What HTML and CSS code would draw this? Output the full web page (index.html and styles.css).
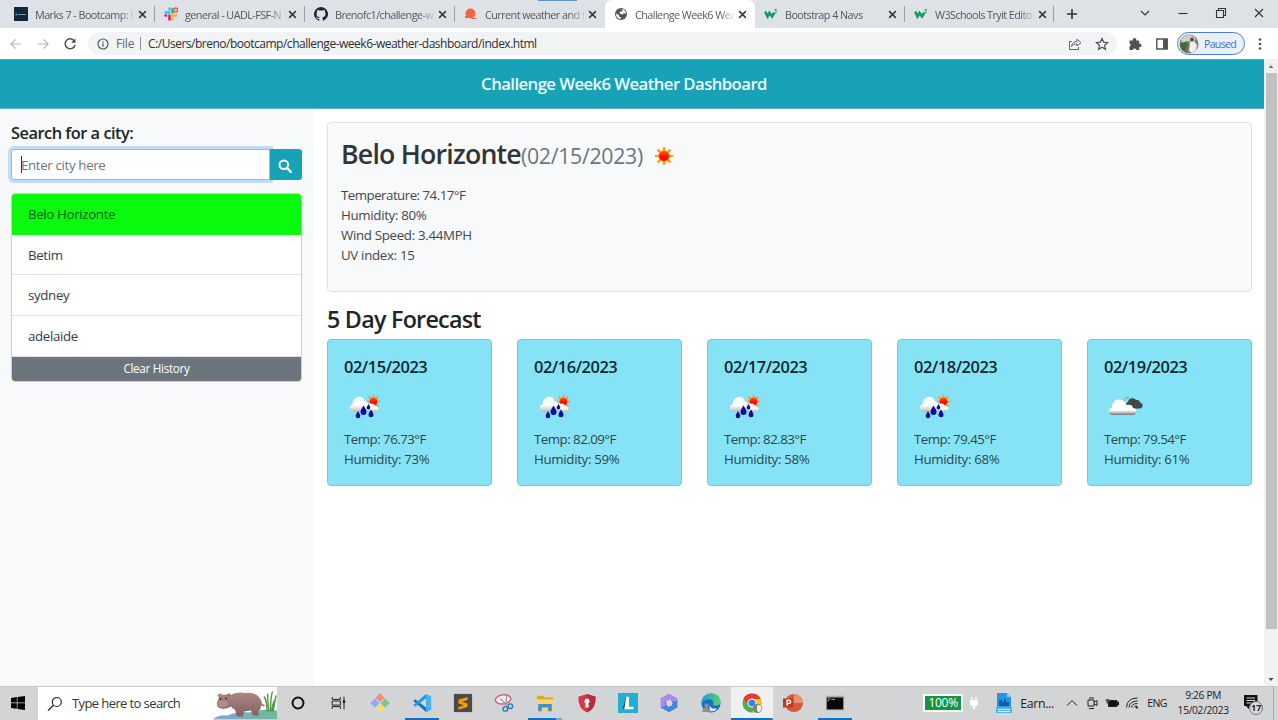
FILE: index.html
```
<!DOCTYPE html>
<html lang="en">
<head>
<meta charset="utf-8">
<title>Challenge Week6 Weather Dashboard</title>
<link rel="stylesheet" href="styles.css">
</head>
<body>
<svg class="defs" width="0" height="0" aria-hidden="true">
  <defs>
    <linearGradient id="cloudFill" x1="0" y1="0" x2="0" y2="1"><stop offset="0.55" stop-color="#fff"/><stop offset="1" stop-color="#b8b8b8"/></linearGradient>
    <linearGradient id="cloudEdge" x1="0" y1="0" x2="0" y2="1"><stop offset="0.7" stop-color="#fff"/><stop offset="1" stop-color="#777"/></linearGradient>
    <linearGradient id="sunFill" x1="0" y1="0" x2="0" y2="1"><stop offset="0" stop-color="#ff5a00"/><stop offset="0.6" stop-color="#ff0800"/></linearGradient>
    <linearGradient id="hippo" x1="0" y1="0" x2="0" y2="1"><stop offset="0" stop-color="#b08780"/><stop offset="1" stop-color="#80605f"/></linearGradient>
    <linearGradient id="water" x1="0" y1="0" x2="1" y2="0"><stop offset="0" stop-color="#83a4d6"/><stop offset="1" stop-color="#70b8a0"/></linearGradient>
    <linearGradient id="edgeTop" x1="0" y1="0" x2="1" y2="0"><stop offset="0" stop-color="#1aa0dc"/><stop offset="1" stop-color="#5cd068"/></linearGradient>
    <symbol id="sun" viewBox="0 0 20 20">
      <circle cx="10" cy="10" r="6" fill="#ffae35"/>
      <path stroke="#ff9420" stroke-width="2.200" d="M10 1v18M1 10h18M3.600 3.600l12.800 12.800M16.400 3.600L3.600 16.400"/>
      <circle cx="10" cy="10" r="4.900" fill="url(#sunFill)"/>
    </symbol>
    <symbol id="rain" viewBox="0 0 32 26">
      <use href="#sun" x="17" y="0" width="15" height="15"/>
      <path fill="url(#cloudFill)" d="M17 18c-2-1-1-5 1.500-5 0-4 6.500-5 7.500-1 4-.5 5 5 1 6z"/>
      <path fill="url(#cloudFill)" d="M4.500 18C0 18-.5 11 3.500 10.500 3.500 2 14 0 15.500 7c4 .5 5 4.500 3.500 7l1 4z"/>
      <g fill="#0a1196"><path d="M14.500 11.500c2 3.500 3 4.500 3 6.500a3 3 0 0 1-6 0c0-2 1-3 3-6.500z"/><path d="M19.500 10c1.300 2.200 1.800 2.800 1.800 3.800a1.800 1.800 0 0 1-3.600 0c0-1 .5-1.600 1.800-3.800z"/><path d="M9 17c1.500 2.500 2.300 3.500 2.300 5a2.300 2.300 0 0 1-4.600 0c0-1.500.8-2.500 2.300-5z"/><path d="M22 15.500c1.700 2.700 2.500 3.900 2.500 5.300a2.500 2.500 0 0 1-5 0c0-1.400.8-2.600 2.500-5.300z"/></g>
    </symbol>
    <symbol id="clouds" viewBox="0 0 36 20">
      <path fill="#464646" d="M20 13c-3-2-3-6 0-7 0-4 6-5 8-2 3-.5 4 1 4 2.500 4 1 3 5.500 0 6z"/>
      <path d="M16 6c0-3 2-5 5-4" stroke="#8b8b8b" fill="none"/>
      <path fill="url(#cloudEdge)" d="M4.500 19C-.5 19 0 12 4 11.500 3.500 5 9.500 2 14 4c3 1 4 3 4.500 5 4-1 6 0 6.500 3 5 0 4 7 0 7z"/>
    </symbol>
    <symbol id="x" viewBox="0 0 8 8"><path d="M1 1l6 6M7 1L1 7" stroke="#36393d" stroke-width="1.400" fill="none"/></symbol>
    <symbol id="w3" viewBox="0 0 14 12"><path d="M1.200 3.500l2.300 5 2-3.500L8 8.500l2.500-4" fill="none" stroke="#119c66" stroke-width="2.600"/><path d="M10.500 1.500h2L11.500 3q2 1 0 2" fill="none" stroke="#119c66" stroke-width=".9"/></symbol>
  </defs>
</svg>

<header class="browser">
  <div class="tabs">
    <div class="tab"><svg class="fav" viewBox="0 0 14 14"><path fill="#12283a" d="M0 0h14v14H0z"/><path fill="#8196a5" d="M1.500 6.500h1.500v2H1.500zM4 7h8v1H4z"/></svg><span class="tab-title">Marks 7 - Bootcamp: U</span><svg class="close"><use href="#x"/></svg></div>
    <div class="tab"><svg class="fav" viewBox="0 0 14 14" fill="none" stroke-width="2.500" stroke-linecap="round"><path d="M1.500 5.500h4M5.500 1.500v1" stroke="#36c5f0"/><path d="M8.500 2v3.500" stroke="#2eb67d"/><path d="M8.500 8.500h4M8.500 11.500v.8" stroke="#ecb22e"/><path d="M5.500 8.500v4M1.500 8.500h.5" stroke="#e01e5a"/><circle cx="11.600" cy="3" r="2" stroke="#e8515d" stroke-width="1.300" fill="#f6c9cc"/></svg><span class="tab-title">general - UADL-FSF-N</span><svg class="close"><use href="#x"/></svg></div>
    <div class="tab"><svg class="fav" viewBox="0 0 16 16"><path fill="#20262c" d="M8 0a8 8 0 0 0-2.530 15.590c.4.070.55-.170.55-.380v-1.490c-2.010.370-2.530-.490-2.690-.940-.090-.230-.480-.940-.820-1.130-.280-.150-.680-.520-.010-.530.630-.010 1.080.580 1.230.820.720 1.210 1.870.870 2.330.660.070-.520.280-.870.510-1.070-1.780-.200-3.640-.890-3.640-3.950 0-.870.310-1.590.820-2.150-.080-.200-.360-1.020.080-2.120 0 0 .670-.210 2.200.820a7.600 7.600 0 0 1 4 0c1.530-1.040 2.200-.820 2.200-.820.440 1.100.160 1.920.080 2.120.510.560.820 1.270.820 2.150 0 3.070-1.870 3.750-3.650 3.950.290.250.540.730.540 1.480v2.200c0 .210.150.460.550.380A8 8 0 0 0 8 0z"/></svg><span class="tab-title">Brenofc1/challenge-w</span><svg class="close"><use href="#x"/></svg></div>
    <div class="tab no-sep"><svg class="fav" viewBox="0 0 14 14"><circle cx="6.500" cy="6.500" r="5" fill="#ea6a47"/><path fill="#ea6a47" d="M1 9h8l4 3H8l-1-1H1z"/><path d="M9 10.500h3.500" stroke="#f7c1b0"/></svg><span class="tab-title">Current weather and f</span><svg class="close"><use href="#x"/></svg></div>
    <div class="tab active"><svg class="fav" viewBox="0 0 14 14"><circle cx="7" cy="7" r="6" fill="#53575b"/><path fill="#fff" d="M2 6.500l3 1.500v1.500l2 1v1.300C4 12 2 10 2 6.500zM6 2.200l3 .3-1 2-2 .3-.5 1.700 3 1 1.500-1.500 1.700 1.200C12 5 11 3 9 2z"/></svg><span class="tab-title">Challenge Week6 Wea</span><svg class="close"><use href="#x"/></svg></div>
    <div class="tab"><svg class="fav"><use href="#w3"/></svg><span class="tab-title">Bootstrap 4 Navs</span><svg class="close"><use href="#x"/></svg></div>
    <div class="tab last"><svg class="fav"><use href="#w3"/></svg><span class="tab-title">W3Schools Tryit Edito</span><svg class="close"><use href="#x"/></svg></div>
    <svg class="plus" viewBox="0 0 12 12"><path d="M6 1v10M1 6h10" stroke="#303338" stroke-width="1.600"/></svg>
    <div class="window-controls" >
      <svg viewBox="0 0 12 12"><path d="M2 4l4 4 4-4" /></svg>
      <svg viewBox="0 0 12 12"><path d="M1.500 6.500h9"/></svg>
      <svg viewBox="0 0 12 12"><path d="M1.500 3.500h7v7h-7zM3.500 3.500v-2h7v7h-2"/></svg>
      <svg viewBox="0 0 12 12"><path d="M2 2l8 8M10 2l-8 8"/></svg>
    </div>
    <i class="strip"></i>
  </div>
  <div class="toolbar">
    <svg class="nav-icon dim" viewBox="0 0 14 14"><path d="M12 7H2.500M6.500 2.500L2 7l4.500 4.500"/></svg>
    <svg class="nav-icon dim" viewBox="0 0 14 14"><path d="M2 7h9.500M7.500 2.500L12 7l-4.500 4.500"/></svg>
    <svg class="nav-icon" viewBox="0 0 14 14"><path d="M11.500 4.300A5 5 0 1 0 12 8" stroke-width="1.500"/><path d="M12.500 1.500v4.300H8.200z" fill="#4b4f53" stroke="none"/></svg>
    <div class="omnibox">
      <svg class="info" viewBox="0 0 12 12"><circle cx="6" cy="6" r="5" fill="none" stroke="#55595d" stroke-width="1.200"/><path d="M6 5.300v3.400M6 3.200v1.200" stroke="#55595d" stroke-width="1.200"/></svg>
      <span class="scheme">File</span><i class="bar"></i><span class="url">C:/Users/breno/bootcamp/challenge-week6-weather-dashboard/index.html</span>
      <svg class="share" viewBox="0 0 14 14" fill="none" stroke="#62666a"><path d="M4 4.500H1.500v8h9V10M3.500 9.500c.5-3.500 2.500-5 5.500-5v-2.300L13 5.700 9 9V7C6.500 7 5 7.500 3.500 9.500z"/></svg>
      <svg class="star" viewBox="0 0 14 14" fill="none" stroke="#4d5155" stroke-width="1.200"><path d="M7 1.500l1.600 3.700 4 .4-3 2.700.9 4L7 10.200l-3.500 2.100.9-4-3-2.700 4-.4z"/></svg>
    </div>
    <svg class="ext" viewBox="0 0 14 14"><path fill="#505458" d="M1.500 3.500h3.300a1.800 1.800 0 1 1 3.400 0h3v3.200a1.800 1.800 0 1 1 0 3.400v2.900H8.300a1.800 1.800 0 0 0-3.500 0H1.500V9.600a1.800 1.800 0 0 0 0-3.300z"/></svg>
    <svg class="panel" viewBox="0 0 14 14"><path d="M1.800 2h10.400v10H1.800z" fill="none" stroke="#505458" stroke-width="1.400"/><path fill="#505458" d="M8 2h4.500v10H8z"/></svg>
    <div class="profile"><svg viewBox="0 0 20 20"><circle cx="10" cy="10" r="9.500" fill="#6f8866"/><path fill="#c9d3d6" d="M2 5q8-8 15 0l-3 3-6-1-5 2z"/><path fill="#446b38" d="M1 9l6-1 3 4-3 6Q1 16 1 9z"/><path fill="#f2eeee" d="M11 8l4-1 3 4-1 5-4 3-3-2z"/><circle cx="13" cy="5.500" r="2" fill="#5d4a40"/><path d="M9 11l-2 7" stroke="#8b6a5c" stroke-width="1.500"/></svg><span>Paused</span></div>
    <svg class="dots" viewBox="0 0 4 14" fill="#505458"><circle cx="2" cy="2.500" r="1.300"/><circle cx="2" cy="7" r="1.300"/><circle cx="2" cy="11.500" r="1.300"/></svg>
  </div>
</header>

<div class="viewport">
  <div class="page">
    <div class="banner"><h1>Challenge Week6 Weather Dashboard</h1></div>
    <div class="columns">
      <aside class="sidebar">
        <h3 class="label">Search for a city:</h3>
        <div class="search"><div class="field"><i class="caret"></i><span>Enter city here</span></div><div class="search-btn"><svg viewBox="0 0 14 14"><circle cx="5.800" cy="5.800" r="4.300" fill="none" stroke="#fff" stroke-width="2"/><path d="M9 9l3.800 3.800" stroke="#fff" stroke-width="2.400" stroke-linecap="round"/></svg></div></div>
        <div class="history">
          <div class="city selected"><span>Belo Horizonte</span></div>
          <div class="city"><span>Betim</span></div>
          <div class="city"><span>sydney</span></div>
          <div class="city"><span>adelaide</span></div>
          <div class="clear"><span>Clear History</span></div>
        </div>
      </aside>
      <main class="content">
        <section class="today">
          <div class="today-head"><h2>Belo Horizonte</h2><span class="date">(02/15/2023)</span><svg class="today-icon"><use href="#sun"/></svg></div>
          <p class="temp">Temperature: 74.17°F</p><p>Humidity: 80%</p><p>Wind Speed: 3.44MPH</p><p>UV index: 15</p>
        </section>
        <h2 class="forecast-title">5 Day Forecast</h2>
        <section class="forecast">
          <article class="day"><h4>02/15/2023</h4><svg class="wx"><use href="#rain"/></svg><p class="temp">Temp: 76.73°F</p><p>Humidity: 73%</p></article>
          <article class="day"><h4>02/16/2023</h4><svg class="wx"><use href="#rain"/></svg><p class="temp">Temp: 82.09°F</p><p>Humidity: 59%</p></article>
          <article class="day"><h4>02/17/2023</h4><svg class="wx"><use href="#rain"/></svg><p class="temp">Temp: 82.83°F</p><p>Humidity: 58%</p></article>
          <article class="day"><h4>02/18/2023</h4><svg class="wx"><use href="#rain"/></svg><p class="temp">Temp: 79.45°F</p><p>Humidity: 68%</p></article>
          <article class="day"><h4>02/19/2023</h4><svg class="wx cloudy"><use href="#clouds"/></svg><p class="temp">Temp: 79.54°F</p><p>Humidity: 61%</p></article>
        </section>
      </main>
    </div>
  </div>
  <div class="scrollbar"><svg viewBox="0 0 14 14"><path d="M4.500 9L7 6l2.500 3z" fill="#777"/></svg><i class="thumb"></i><svg viewBox="0 0 14 14"><path d="M4.500 6L7 9l2.500-3z" fill="#444"/></svg></div>
</div>

<footer class="taskbar">
  <div class="start"><svg viewBox="0 0 14 14"><path d="M0 2l5.800-.9v5.400H0zM6.500 1L14 0v6.500H6.500zM0 7.300h5.800v5.500L0 12zM6.500 7.300H14V14l-7.500-1.100z"/></svg></div>
  <div class="task-search">
    <svg class="lens" viewBox="0 0 16 16"><circle cx="9.800" cy="6" r="4.500" fill="none" stroke="#222" stroke-width="1.200"/><path d="M6.500 9.200L1 14.500" stroke="#222" stroke-width="1.300"/></svg>
    <span>Type here to search</span>
    <svg class="hippo" viewBox="0 0 64 32"><path fill="url(#water)" d="M0 32q6-5 14-4 12-5 22-3 14-4 28-2v9z"/><path fill="url(#hippo)" d="M16 8Q24 4 32 5.500q9-1.500 14 4 3 4 3 7l3 1-1 1.500-3-1q0 4-3 6l1 4h-6l-2-5-7 1-1 5h-6l-2-7q-3-1-4-3-5 3-10 2-5-1-4-6l2-5-1-3 3-1 2 1.500 5-1 2-1.500z"/><path fill="#8e6563" d="M4.500 7l2 .5-1 2zM15 6.500l2.500 0-1.500 3z"/><path fill="#b98a86" d="M4.500 14q4-2 9.500 0l1 4q-5 3-11 .5z"/><circle cx="7.500" cy="11.500" r=".8"/><circle cx="13" cy="11" r=".8"/><path d="M54 24q0-11-3-15M56 24q-2-13-1-18M57.500 24q0-14 2-20M59 24q0-8 4-13M60 24l3-16" fill="none" stroke="#4d9b48" stroke-width="1.400"/></svg>
  </div>
  <div class="apps">
    <div class="app"><svg viewBox="0 0 22 22"><circle cx="11" cy="11" r="6" fill="none" stroke="#111" stroke-width="2.200"/></svg></div>
    <div class="app"><svg viewBox="0 0 22 22" fill="none" stroke="#222" stroke-width="1.100"><path d="M3.500 4.500V7h9V4.500M3.500 8.800h9v4.500h-9zM3.500 17.500V15h9v2.500M16.500 4v14"/><path d="M15.200 8h2.600v3h-2.600z" fill="#222" stroke="none"/></svg></div>
    <div class="app"><svg viewBox="0 0 22 22"><g transform="rotate(45 11 11)"><path fill="#f48a85" d="M3.500 3.500h7v7h-7z"/><path fill="#82c77a" d="M11.500 3.500h7v7h-7z"/><path fill="#8dabf0" d="M3.500 11.500h7v7h-7z"/><path fill="#f7dc74" d="M11.500 11.500h7v7h-7z"/></g></svg></div>
    <div class="app run"><svg viewBox="0 0 22 22"><path fill="#1474bd" d="M15.500 1L17 14v7h-1.500L1.500 8.800 3.500 7l12 9z"/><path fill="#2397e0" d="M15.500 1v4.800L3.500 15l-2-1.800z"/><path fill="#45b2f5" d="M15.500 1L21 3.500v15L15.500 21z"/></svg></div>
    <div class="app"><svg viewBox="0 0 22 22"><path fill="#4b4b4b" d="M1 1h20v20H1z"/><path fill="#ff9800" d="M16 4.500v3.200L10 9.500l6 2v4l-10 3v-3.200l6-1.800-6-2v-4z"/></svg></div>
    <div class="app"><svg viewBox="0 0 22 22" fill="none"><ellipse cx="10" cy="7" rx="8.500" ry="5" stroke="#d95a62" stroke-width="1.500" fill="#f5eeee" transform="rotate(-8 10 7)"/><path d="M14 3l-1 11M7 6l7 8" stroke="#8f969d" stroke-width="1.300"/><circle cx="12.500" cy="17.500" r="2.500" stroke="#2c75b5" stroke-width="1.500"/><circle cx="18" cy="14.500" r="2.500" stroke="#2c75b5" stroke-width="1.500"/></svg></div>
    <div class="app run more"><svg viewBox="0 0 22 22"><path fill="#dba92f" d="M2 3h7l2 2h9v5H2z"/><path fill="#fbd668" d="M2 7h18v12H2z"/><path fill="#3f91d4" d="M3.500 12h15v8h-4v-4h-7v4h-4z"/></svg></div>
    <div class="app"><svg viewBox="0 0 22 22"><path fill="#d83846" d="M11 1l9.500 3q.5 13-9.500 17.500Q1 17 1.500 4z"/><path fill="#b92c3d" d="M11 1l9.500 3q.5 13-9.500 17.500z"/><path fill="#fff" d="M11 6a3 3 0 0 1 1.500 5.500L13 16H9l.5-4.500A3 3 0 0 1 11 6z"/></svg></div>
    <div class="app"><svg viewBox="0 0 22 22"><path fill="#22aed1" d="M0 0h22v22H0z"/><path fill="#11445c" d="M5 18L9 4v11z"/><path fill="#fff" d="M9 4h3v11h5v3H7z"/></svg></div>
    <div class="app"><svg viewBox="0 0 22 22"><path fill="#705ac5" d="M11 1l9 5v10l-9 5-9-5V6z"/><path fill="#a98bea" d="M11 1l9 5v5l-9-4-4 3v6l-5-1V6z"/><path fill="#4286de" d="M2 16l9-3 9-5v8l-9 5z"/><path fill="#d4d4de" d="M8 9l4-2 3 3-1 4-4 1-2-2z"/></svg></div>
    <div class="app"><svg viewBox="0 0 22 22"><circle cx="11" cy="11" r="10.500" fill="#176fc1"/><path fill="url(#edgeTop)" d="M.5 11C.5-2.500 21-2.500 21.500 9c0 4-3 5-6 5-4 0-2-2-2-4 0-4-8-5-13 1z"/><path fill="#d9e7ee" d="M9 12q1 6 9 5-3 4-8 3z"/><circle cx="6" cy="14" r="2.400" fill="#8e8e8e"/><path fill="#8e8e8e" d="M1.500 21q0-5 4.500-5t4.500 5z"/></svg></div>
    <div class="app current"><svg viewBox="0 0 22 22"><circle cx="11" cy="11" r="10.500" fill="#4caf50"/><path fill="#e63b2e" d="M1.500 6.500A10.500 10.500 0 0 1 20.500 6.500l-9.500.5-4 5z"/><path fill="#fbc116" d="M20.500 6.500A10.500 10.500 0 0 1 11 21.500l4-8.500-3-6z"/><circle cx="11" cy="11" r="5" fill="#fff"/><circle cx="11" cy="11" r="3.900" fill="#3f7fe8"/><circle cx="17" cy="17" r="5" fill="#778371"/><path fill="#f0eeea" d="M16.500 13.500l4 0 1 5-3 3-2-2z"/></svg></div>
    <div class="app"><svg viewBox="0 0 22 22"><circle cx="12" cy="11" r="10" fill="#d85838"/><path fill="#ef9071" d="M12 1A10 10 0 0 1 22 11H12z"/><path fill="#bd3b1c" d="M0 6h11v10H0z"/><path d="M4.500 14V8h2q2 0 2 1.700T6.500 11.500h-2" fill="none" stroke="#fff" stroke-width="1.500"/></svg></div>
    <div class="app run"><svg viewBox="0 0 22 22"><path fill="#aaa" d="M1 3h20v16H1z"/><path fill="#090909" d="M2 5h18v13H2z"/><path d="M3 6.500h3M7 7h4M2.500 8.500h2" stroke="#bbb"/></svg></div>
  </div>
  <div class="tray">
    <div class="battery">100%</div>
    <svg class="plug" viewBox="0 0 12 16"><path fill="#fff" d="M3 2h1.300v3h3V2h1.300v3H10v3q0 3-3 3.500V14H5v-2.500Q2 11 2 8V5h1z"/></svg>
    <svg class="news" viewBox="0 0 16 20"><path fill="#2696df" d="M1 0h10l4 4v10H1z"/><path fill="#80cdf5" d="M11 0l4 4h-4z"/><path fill="#0e5ea8" d="M3 11V7h3v2h2V6h2v3h3v4H3z"/><path fill="#4db7ed" d="M0 14h16v6H0z"/><path d="M2 16.500h12M2 18.500h12" stroke="#eef"/></svg>
    <span class="earn">Earn...</span>
    <svg class="t-icon up" viewBox="0 0 14 14"><path d="M2 9.500L7 4.500l5 5"/></svg>
    <svg class="t-icon" viewBox="0 0 14 14"><path d="M3 4h6v6H3zM9 6l3-1.500v5L9 8M4 2h5M4 12.500h5"/></svg>
    <svg class="t-icon" viewBox="0 0 14 14"><path d="M4.500 4.500h7.500v6H3.500V7" fill="#111"/><path fill="#111" d="M12.500 6H14v3h-1.500z"/><path d="M.5 4h4M1 6h4M3 3v5"/></svg>
    <svg class="t-icon wifi" viewBox="0 0 14 14"><path d="M1.500 11.500Q2 2 12.500 2M4 11.500Q4.500 5 12.500 5M6.500 11.500Q7 7.500 12.500 7.500M9 11.500q.5-1.500 3-1.500"/><circle cx="11.800" cy="11.500" r=".8" fill="#222"/></svg>
    <span class="lang">ENG</span>
    <div class="clock"><span>9:26 PM</span><span>15/02/2023</span></div>
    <div class="notice"><svg viewBox="0 0 16 16"><path d="M1 1h13.500v11H6v3l-3-3H1z" fill="#111"/><path d="M3.500 4h8.500M3.500 6.500h8.500M3.500 9h5" stroke="#ddd"/></svg><b>17</b></div>
    <i class="peek"></i>
  </div>
</footer>
</body>
</html>
```
FILE: styles.css
```
* { box-sizing: border-box; }
body { margin: 0; width: 1278px; height: 720px; overflow: hidden; display: flex; flex-direction: column; background: #fff; color: #212529; font-family: "Open Sans", "Noto Sans", sans-serif; font-size: 13.3px; }
h1, h2, h3, h4, p { margin: 0; white-space: nowrap; }
span { white-space: nowrap; }
svg { display: block; flex: none; }
.defs { position: absolute; }

.browser { height: 59px; flex: none; }
.tabs { position: relative; height: 28px; background: #dee1e6; display: flex; align-items: center; padding-left: 5px; }
.tab { width: 150px; height: 28px; flex: none; display: flex; align-items: center; padding-left: 9px; background: linear-gradient(#9b9ea2, #9b9ea2) right center / 1px 16px no-repeat; }
.tab.no-sep { background: none; }
.tab.active { background: #fff; border-radius: 7px 7px 0 0; }
.tab.last { width: 149px; }
.fav { width: 14px; height: 14px; margin-right: 7px; }
.tab-title { width: 99px; font-size: 10.8px; letter-spacing: -0.55px; color: #55585d; -webkit-mask-image: linear-gradient(90deg, #000 85%, rgba(0, 0, 0, 0.15) 100%); mask-image: linear-gradient(90deg, #000 85%, rgba(0, 0, 0, 0.15) 100%); }
.close { width: 9px; height: 9px; margin-left: 4px; }
.plus { width: 12px; height: 12px; margin-left: 12px; }
.window-controls { margin-left: auto; display: flex; }
.window-controls svg { width: 12px; height: 12px; margin: 0 13px; fill: none; stroke: #333; stroke-width: 1.1; position: relative; top: -1px; }
.strip { position: absolute; left: 538px; top: 0; width: 39px; height: 1px; background: #5a93cd; }
.toolbar { height: 31px; display: flex; align-items: center; padding-left: 9px; background: #fff; }
.nav-icon { width: 14px; height: 14px; margin-right: 13px; fill: none; stroke: #4b4f53; stroke-width: 1.2; }
.nav-icon.dim { stroke: #b6b8ba; }
.nav-icon:nth-child(3) { margin-right: 11px; }
.omnibox { width: 1029px; height: 23px; background: #f1f3f4; border-radius: 12px; display: flex; align-items: center; padding: 0 8px 0 9px; }
.info { width: 12px; height: 12px; margin-right: 7px; }
.scheme { width: 24px; font-size: 12px; letter-spacing: -0.2px; color: #64686c; }
.bar { width: 1px; height: 13px; background: #8d9194; margin-right: 7px; }
.url { font-size: 12px; letter-spacing: -0.49px; color: #2c2f33; }
.share { width: 14px; height: 14px; margin-left: auto; }
.star { width: 14px; height: 14px; margin-left: 13px; }
.ext { width: 14px; height: 14px; margin-left: 11px; }
.panel { width: 14px; height: 14px; margin-left: 13px; }
.profile { width: 68px; height: 23px; margin-left: 8px; border: 1px solid #4c7ed6; border-radius: 12px; background: #e9f0fc; display: flex; align-items: center; padding-left: 1px; color: #3f6ec9; font-size: 10.6px; letter-spacing: -0.7px; }
.profile svg { width: 20px; height: 20px; margin-right: 5px; }
.dots { width: 4px; height: 14px; margin-left: 13px; }

.viewport { height: 627px; flex: none; display: flex; }
.page { width: 1264px; }
.banner { height: 50px; background: #17a2b8; border-top: 1px solid #48abc0; border-bottom: 1px solid #58b6c7; padding: 0 16px 2px 0; display: flex; align-items: center; justify-content: center; }
.banner h1 { font-size: 16.7px; font-weight: 600; color: #eefdff; letter-spacing: -0.55px; }
.columns { display: flex; height: 577px; }
.sidebar { width: 314px; padding: 12px 12px 0 11px; background: #f8f9fa; }
.label { font-size: 16.4px; line-height: 24px; font-weight: 600; letter-spacing: -0.5px; }
.search { display: flex; margin-top: 4px; height: 31px; }
.field { width: 259px; border: 1px solid #80bdff; border-radius: 3px 0 0 3px; box-shadow: 0 0 0 3px #bfdeff; background: #fff; display: flex; align-items: center; padding-left: 9px; color: #6c757d; font-size: 13.3px; letter-spacing: -0.35px; }
.caret { width: 1px; height: 17px; background: #333; margin-right: -1px; }
.search-btn { width: 32px; background: #17a2b8; border-radius: 0 3px 3px 0; display: flex; align-items: center; justify-content: center; padding: 2px 2px 0 0; }
.search-btn svg { width: 14px; height: 14px; }
.history { margin-top: 13px; height: 189px; border: 1px solid #d4dc72; border-radius: 4px; overflow: hidden; background: #fff; display: grid; grid-template-rows: repeat(4, 40.7px) 1fr; }
.city { padding-left: 16px; display: flex; align-items: center; border-bottom: 1px solid #e2e3e4; color: #373d43; letter-spacing: -0.35px; }
.city.selected { background: #0afa0e; border-color: #0afa0e; color: #0b5c16; }
.clear { background: #6c757d; color: #fff; display: flex; align-items: center; justify-content: center; font-size: 11.7px; letter-spacing: -0.3px; padding-bottom: 2px; }
.content { padding: 13px 12px 0 13px; width: 950px; }
.today { height: 170px; border: 1px solid #e0e2e4; border-radius: 4px; background: #f8f9fa; padding: 15px 13px; color: #42474b; }
.today-head { display: flex; align-items: baseline; height: 47px; line-height: 32px; }
.today-head h2 { font-size: 26.7px; font-weight: 600; color: #30353a; letter-spacing: -0.78px; }
.date { font-size: 21.3px; color: #6c757d; letter-spacing: -0.3px; }
.today-icon { width: 20px; height: 20px; margin-left: 11px; align-self: flex-start; margin-top: 8px; }
.today p { line-height: 20px; letter-spacing: -0.32px; }
.today .temp { letter-spacing: -0.52px; }
.forecast-title { margin-top: 13px; height: 34px; line-height: 29px; font-size: 23.3px; font-weight: 600; letter-spacing: -0.75px; }
.forecast { display: grid; grid-template-columns: repeat(5, 165px); justify-content: space-between; }
.day { height: 147px; border: 1px solid #72c9dc; border-radius: 4px; background: #86e3f5; padding: 16px; color: #2b4850; }
.day h4 { font-size: 16.4px; line-height: 22px; font-weight: 600; color: #13272d; letter-spacing: -0.45px; }
.wx { width: 32px; height: 26px; margin: 16px 0 9px 5px; }
.wx.cloudy { width: 36px; height: 20px; margin: 18px 0 13px 4px; }
.day p { line-height: 20px; letter-spacing: -0.32px; }
.day .temp { letter-spacing: -0.52px; }
.scrollbar { width: 14px; background: #f1f1f1; display: flex; flex-direction: column; align-items: center; }
.scrollbar svg { width: 14px; height: 14px; }
.thumb { width: 11px; height: 556px; background: #c1c1c1; margin-bottom: 43px; }

.taskbar { height: 34px; background: #d3d4d5; display: flex; border-top: 1px solid #c5c6c7; }
.start { width: 38px; display: flex; align-items: center; justify-content: center; padding: 0 2px 1px 0; }
.start svg { width: 14px; height: 14px; }
.task-search { width: 239px; background: #fff; display: flex; align-items: center; padding-left: 9px; font-size: 13px; letter-spacing: -0.6px; color: #333; }
.task-search span { padding-bottom: 2px; }
.lens { width: 16px; height: 16px; margin-right: 9px; }
.task-search .hippo { width: 64px; height: 33px; margin-left: auto; }
.apps { display: flex; }
.app { width: 41.3px; display: flex; align-items: center; justify-content: center; padding-bottom: 1px; }
.app svg { width: 20px; height: 20px; }
.app.run { background: linear-gradient(#0c71ca, #0c71ca) center bottom / 34px 2px no-repeat; }
.app.more { background: linear-gradient(90deg, #0c71ca 82%, #76a9da 82%) center bottom / 34px 2px no-repeat; }
.app.current { background: linear-gradient(#0c71ca, #0c71ca) center bottom / 100% 2px no-repeat #f0f0f0; }
.tray { flex: 1; display: flex; align-items: center; color: #222; padding: 0 0 1px 68px; }
.battery { width: 40px; height: 18px; background: #149447; border: 2px solid #fff; color: #fff; font-size: 12px; line-height: 13px; text-align: center; letter-spacing: -0.3px; }
.plug { width: 12px; height: 16px; margin: 0 16px 0 5px; }
.news { width: 16px; height: 20px; margin-right: 8px; }
.earn { width: 45px; font-size: 12.3px; letter-spacing: -0.3px; }
.t-icon { width: 14px; height: 14px; margin-right: 6px; fill: none; stroke: #222; stroke-width: 1; }
.lang { width: 28px; font-size: 10.6px; margin-left: 2px; letter-spacing: -0.6px; }
.clock { width: 56px; font-size: 10.2px; line-height: 15.5px; display: flex; flex-direction: column; align-items: center; letter-spacing: -0.3px; }
.notice { position: relative; margin-left: 12px; width: 26px; height: 18px; }
.notice svg { width: 16px; height: 16px; }
.notice b { position: absolute; left: 6px; top: 7px; width: 14px; height: 14px; border: 1px solid #777; border-radius: 50%; background: #d9d9d9; font-size: 9px; line-height: 12px; text-align: center; }
.peek { width: 1px; height: 33px; background: #aaa; margin-left: auto; margin-right: 4px; }
```
